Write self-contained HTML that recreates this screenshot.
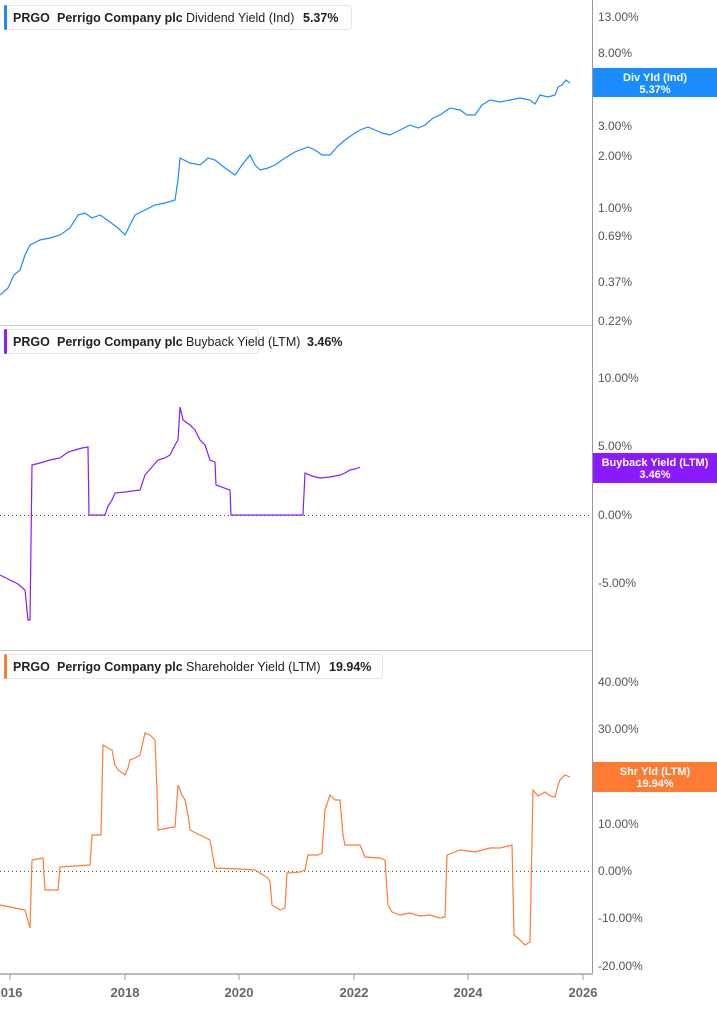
<!DOCTYPE html>
<html><head><meta charset="utf-8"><style>
html,body{margin:0;padding:0;background:#fff;}
svg text{font-family:"Liberation Sans",sans-serif;}
</style></head><body>
<svg width="717" height="1005" viewBox="0 0 717 1005" xmlns="http://www.w3.org/2000/svg">
<rect width="717" height="1005" fill="#fff"/>
<!-- separators -->
<line x1="0" y1="325.5" x2="592" y2="325.5" stroke="#ccc"/>
<line x1="0" y1="650.5" x2="592" y2="650.5" stroke="#ccc"/>
<line x1="592.5" y1="0" x2="592.5" y2="975" stroke="#999"/>
<line x1="0" y1="974" x2="593" y2="974" stroke="#bbb" stroke-width="2"/>
<g stroke="#999"><line x1="10" y1="974" x2="10" y2="980"/><line x1="125" y1="974" x2="125" y2="980"/><line x1="239" y1="974" x2="239" y2="980"/><line x1="354" y1="974" x2="354" y2="980"/><line x1="468" y1="974" x2="468" y2="980"/><line x1="583" y1="974" x2="583" y2="980"/></g>
<g font-size="13" font-weight="bold" fill="#666" text-anchor="middle">
<text x="8" y="997">2016</text><text x="125" y="997">2018</text><text x="239" y="997">2020</text><text x="354" y="997">2022</text><text x="468" y="997">2024</text><text x="583" y="997">2026</text></g>
<!-- zero lines -->
<line x1="0" y1="515.5" x2="592" y2="515.5" stroke="#555" stroke-dasharray="1,3"/>
<line x1="0" y1="871.5" x2="592" y2="871.5" stroke="#555" stroke-dasharray="1,3"/>
<!-- y labels -->
<g font-size="12" fill="#555">
<text x="598" y="21">13.00%</text><text x="598" y="57">8.00%</text><text x="598" y="130">3.00%</text><text x="598" y="160">2.00%</text><text x="598" y="212">1.00%</text><text x="598" y="240">0.69%</text><text x="598" y="286">0.37%</text><text x="598" y="325">0.22%</text>
<text x="598" y="382">10.00%</text><text x="598" y="450">5.00%</text><text x="598" y="519">0.00%</text><text x="598" y="587">-5.00%</text>
<text x="598" y="686">40.00%</text><text x="598" y="733">30.00%</text><text x="598" y="780">20.00%</text><text x="598" y="828">10.00%</text><text x="598" y="875">0.00%</text><text x="598" y="922">-10.00%</text><text x="598" y="970">-20.00%</text>
</g>
<!-- lines -->
<polyline fill="none" stroke="#1a8cff" stroke-width="1.2" points="0,295 8,288 14,275 20,270 25,255 30,245 40,240 50,238 60,235 70,228 78,215 85,213 92,218 100,215 110,222 118,228 125,235 130,225 135,215 145,210 155,205 165,203 175,200 178,180 180,158 190,163 200,165 208,158 215,160 225,168 235,175 242,165 250,155 255,165 260,170 268,168 275,165 285,158 295,152 300,150 308,147 315,150 322,155 330,155 338,146 345,140 352,135 360,130 368,127 375,130 382,133 390,135 400,130 410,125 418,128 425,125 433,118 440,115 450,108 460,110 467,115 475,115 482,105 490,100 500,102 510,100 520,98 530,100 535,104 540,95 548,97 555,95 558,87 562,85 566,80 570,83"/>
<polyline fill="none" stroke="#8a1aff" stroke-width="1.2" points="0,575 10,580 18,584 25,590 28,620 30,620 32,465 40,463 50,460 60,458 68,452 75,450 82,448 88,447 89,515 105,515 108,506 112,500 115,493 125,492 140,490 145,475 158,460 165,458 170,455 175,445 178,440 180,407 183,420 190,425 195,430 200,440 205,445 210,460 215,462 216,485 230,490 231,515 303,515 305,473 312,476 320,478 330,477 340,475 345,473 350,470 355,469 360,467"/>
<polyline fill="none" stroke="#ff7a33" stroke-width="1.2" points="0,905 10,907 25,910 30,928 32,860 43,858 45,890 58,890 60,867 90,865 92,835 101,835 103,745 108,748 112,750 115,765 118,770 125,775 128,768 130,760 135,758 140,755 145,733 150,735 155,740 157,790 158,830 168,828 175,827 178,785 182,795 185,800 188,815 190,830 200,835 210,840 215,868 240,869 255,870 268,878 270,882 272,905 280,910 285,908 287,873 300,872 305,870 308,855 318,855 322,853 325,810 330,795 335,800 340,800 343,835 345,845 360,845 365,857 380,858 385,860 388,905 392,912 400,915 410,913 420,916 430,915 440,918 445,917 447,855 460,850 475,852 490,848 500,848 512,845 514,935 520,940 525,945 530,942 533,790 538,796 540,795 545,792 550,796 555,797 558,785 560,780 565,775 570,777"/>
<!-- legends -->
<g>
<rect x="4.5" y="5.5" width="347" height="24" rx="3" fill="#fff" stroke="#e6e6e6"/>
<rect x="4" y="5" width="3" height="25" rx="1.5" fill="#1a8cff"/>
<text x="13" y="22" font-size="12.5" font-weight="bold" fill="#222">PRGO</text>
<text x="57" y="22" font-size="12.5" font-weight="bold" fill="#222">Perrigo Company plc</text>
<text x="186" y="22" font-size="12.5" fill="#222">Dividend Yield (Ind)</text>
<text x="303" y="22" font-size="12.5" font-weight="bold" fill="#222">5.37%</text>
</g>
<g>
<rect x="4.5" y="329.5" width="254" height="24" rx="3" fill="#fff" stroke="#e6e6e6"/>
<rect x="4" y="329" width="3" height="25" rx="1.5" fill="#8a1aff"/>
<text x="13" y="346" font-size="12.5" font-weight="bold" fill="#222">PRGO</text>
<text x="57" y="346" font-size="12.5" font-weight="bold" fill="#222">Perrigo Company plc</text>
<text x="186" y="346" font-size="12.5" fill="#222">Buyback Yield (LTM)</text>
<text x="307" y="346" font-size="12.5" font-weight="bold" fill="#222">3.46%</text>
</g>
<g>
<rect x="4.5" y="654.5" width="378" height="24" rx="3" fill="#fff" stroke="#e6e6e6"/>
<rect x="4" y="654" width="3" height="25" rx="1.5" fill="#ff7a33"/>
<text x="13" y="671" font-size="12.5" font-weight="bold" fill="#222">PRGO</text>
<text x="57" y="671" font-size="12.5" font-weight="bold" fill="#222">Perrigo Company plc</text>
<text x="186" y="671" font-size="12.5" fill="#222">Shareholder Yield (LTM)</text>
<text x="329" y="671" font-size="12.5" font-weight="bold" fill="#222">19.94%</text>
</g>
<!-- badges -->
<rect x="593" y="68" width="124" height="29" fill="#1a8cff"/>
<text x="655" y="81" font-size="11" font-weight="bold" fill="#fff" text-anchor="middle">Div Yld (Ind)</text>
<text x="655" y="93" font-size="11" font-weight="bold" fill="#fff" text-anchor="middle">5.37%</text>
<rect x="593" y="453" width="124" height="30" fill="#8a1aff"/>
<text x="655" y="466" font-size="11" font-weight="bold" fill="#fff" text-anchor="middle">Buyback Yield (LTM)</text>
<text x="655" y="478" font-size="11" font-weight="bold" fill="#fff" text-anchor="middle">3.46%</text>
<rect x="593" y="762" width="124" height="30" fill="#ff7a33"/>
<text x="655" y="775" font-size="11" font-weight="bold" fill="#fff" text-anchor="middle">Shr Yld (LTM)</text>
<text x="655" y="787" font-size="11" font-weight="bold" fill="#fff" text-anchor="middle">19.94%</text>
</svg>
</body></html>
